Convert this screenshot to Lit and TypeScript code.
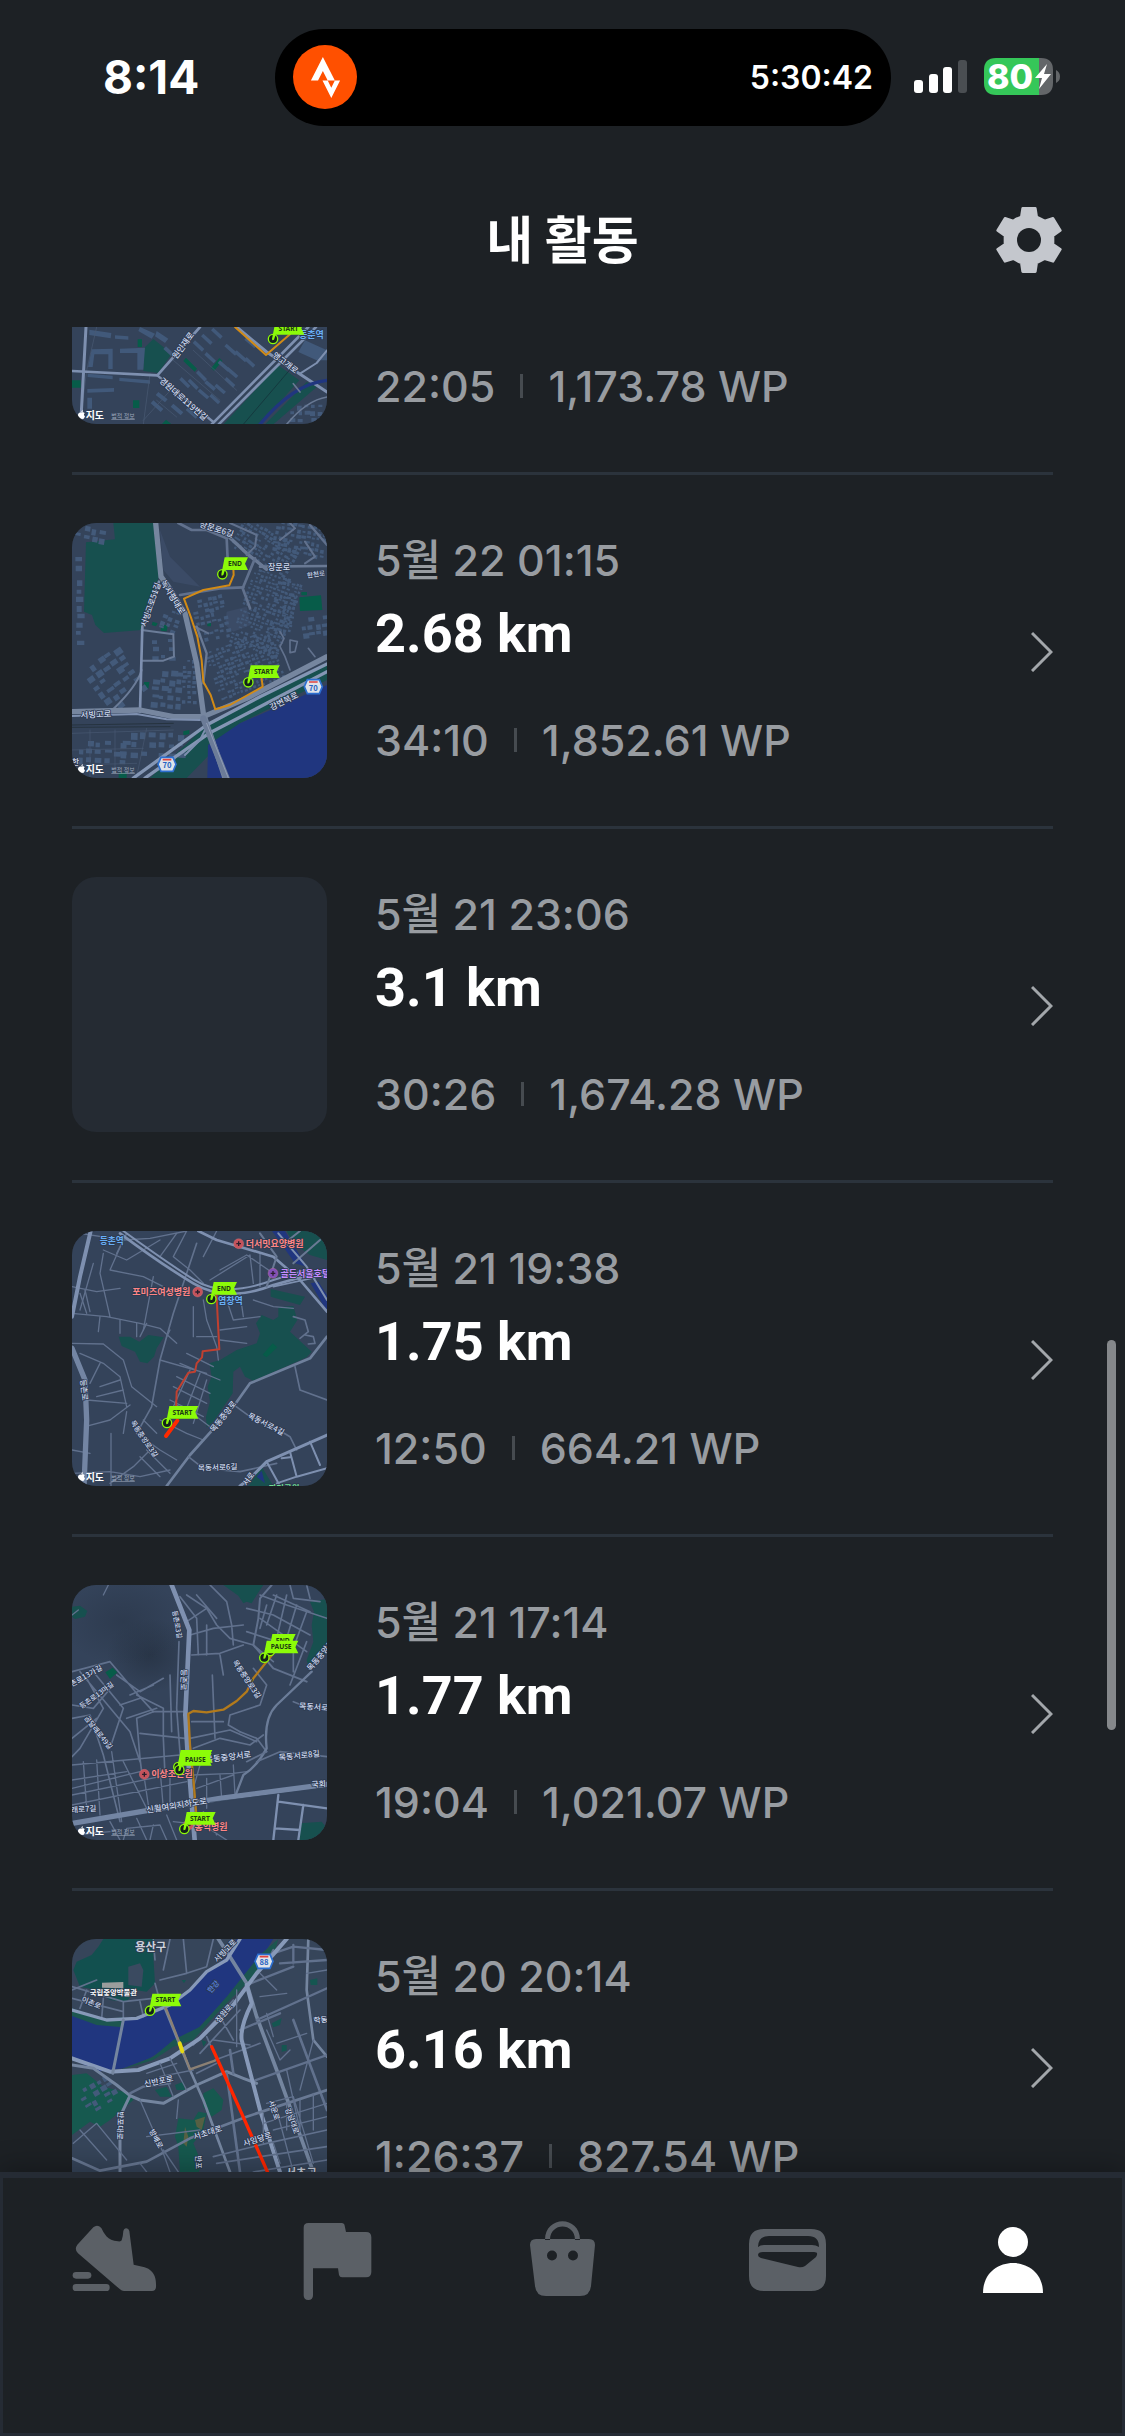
import { LitElement, html, svg, css, nothing } from "lit";
import { customElement, property } from "lit/decorators.js";

type Road = [d: string, width: number, color?: string];
type Label = [text: string, x: number, y: number, size: number, angle?: number, color?: string];
type Flag = [label: string, x: number, y: number, width: number];
type Blocks = [x: number, y: number, w: number, h: number, cell: number, angle: number];

interface MapArt {
  origin: number;
  base?: string;
  areas: [fill: string, d: string][];
  blocks?: Blocks[];
  roads: Road[];
  routes: Road[];
  labels: Label[];
  flags: Flag[];
  pins?: [x: number, y: number, color: string][];
  shields?: [n: string, x: number, y: number][];
  hill?: boolean;
}

interface Activity {
  date?: string;
  distance?: string;
  time: string;
  points: string;
  map?: string;
}

const GREEN = "#17504f";
const PARK = "#075c49";
const WATER = "#20367f";
const MAJOR = "#7e90b0";
const MINOR = "#61718d";
const BLUE = "#68aef5";
const RED = "#ff8585";
const VIOLET = "#c38cff";
const ORANGE = "#d18a16";

/* Small building footprints scattered on a jittered grid. */
const footprints = ([x, y, w, h, cell]: Blocks): string => {
  let seed = x * 7 + y * 13 + 5;
  const rnd = () => (seed = (seed * 16807 + 11) % 2147483647) / 2147483647;
  let d = "";
  for (let py = y; py < y + h; py += cell) {
    for (let px = x; px < x + w; px += cell) {
      if (rnd() < 0.18) continue;
      const bw = Math.round(cell * (0.5 + rnd() * 0.4));
      const bh = Math.round(cell * (0.35 + rnd() * 0.4));
      const jx = Math.round(px + rnd() * cell * 0.3);
      const jy = Math.round(py + rnd() * cell * 0.3);
      d += `M${jx} ${jy}h${bw}v${bh}h${-bw}z`;
    }
  }
  return d;
};

const maps: Record<string, MapArt> = {
  wonin: {
    origin: -454,
    areas: [
      [GREEN, "M250 85L280 56L335 100L295 158L250 152Z M655 135L718 180L600 312H490Z M740 185L770 200L640 312H615Z"],
      [PARK, "M370 122L378 112L411 145L404 154Z M453 144L478 113L487 122L462 151Z M219 240H238V263H219Z M233 57H246V80H233Z M36 180H62V202H36Z M305 312L318 298L335 312Z"],
      ["#41597a", "M88 28L154 38L152 54L88 44Z M165 45L205 48V58L165 55Z M95 87L158 85V146H145V102H103L98 140H84Z M180 85L255 82L250 148H232V98H180Z M83 160L158 166V177L83 170Z M178 172L270 180V190L178 182Z M82 206L162 203V214L82 217Z M82 232H96V265H82Z M240 20L285 40L275 55L235 32Z M290 32L325 55L315 68L285 48Z M735 60L801 90V120H770L715 95Z"],
      ["#41597a", "M318 78l24 22-8 8-24-22z M405 60l28 26-7 8-28-26z M430 40l28 26-7 8-28-26z M460 22l28 26-7 8-28-26z M440 95l28 26-7 8-28-26z M500 70l32 28-7 8-32-28z M530 90l32 28-7 8-32-28z M480 120l30 26-7 8-30-26z M505 140l30 26-7 8-30-26z M415 150l26 26-7 8-26-26z M390 175l26 26-7 8-26-26z M365 170l26 26-7 8-26-26z M440 180l28 24-7 8-28-24z M470 190l28 24-7 8-28-24z M420 205l28 24-7 8-28-24z M455 220l26 24-7 8-26-24z M500 170l26 24-7 8-26-24z M295 215l28 22-8 9-28-22z M280 240l30 26-8 9-30-26z M340 250l30 26-8 9-30-26z M385 260l30 26-8 9-30-26z M560 50l30 26-7 8-30-26z M560 110l26 24-7 8-26-24z"],
    ],
    blocks: [[690, 250, 100, 60, 20, 0]],
    roads: [
      ["M110 20L80 150L60 312 M270 160L250 312 M340 200L250 300 M400 90L530 210 M340 120L480 240 M350 290L290 240", 2, "#4a5a74"],
      ["M78 20L62 312", 9], ["M36 152L292 165L420 20", 8], ["M292 165L460 305", 7], ["M530 20L620 95L801 215", 9],
      ["M455 312L745 20", 8], ["M476 312L768 20", 8], ["M688 150L550 312", 2, "#142e36"],
      ["M720 160L770 128L801 90", 6], ["M600 312Q700 190 801 180", 10, WATER], ["M680 312Q740 240 801 230 M700 190L720 215", 5, "#697994"],
    ],
    routes: [["M525 20L618 104L690 42", 6, ORANGE]],
    labels: [
      ["원인재로", 370, 84, 25, -54], ["경원대로119번길", 370, 245, 25, 41], ["앵고개로", 676, 136, 24, 37],
      ["동춘역", 754, 53, 27, 0, BLUE],
    ],
    flags: [["START", 639, 56, 87]],
  },
  hannam: {
    origin: 39,
    areas: [
      [GREEN, "M160 39H285L300 190L245 360L132 369L106 345L96 315L72 305L78 97L165 88Z M801 460V510L540 640L380 804H270L440 645L600 560Z"],
      [WATER, "M801 525V804H442L444 705L540 640Z"],
      ["#3b4b66", "M300 60L330 140L420 230L340 215L310 180Z M500 305L560 290L572 345L520 365L495 345Z"],
      [PARK, "M718 262L783 256L787 300L720 303Z M724 246H741V256H724Z M304 344L323 346L320 364L302 362Z M278 335L293 340L288 349L275 345Z M252 516H268L265 536L251 534Z M442 338H453V349H442Z M176 788H200V804H176Z M370 664L388 660L388 672L370 676Z"],
    ],
    blocks: [
      [520, 60, 190, 100, 13, 30], [540, 190, 150, 240, 12, 20], [450, 390, 200, 150, 13, -20], [640, 40, 150, 90, 16, 10],
      [400, 260, 90, 120, 17, -12], [365, 450, 45, 130, 15, 0], [90, 430, 140, 150, 28, -35], [250, 385, 80, 60, 24, 0],
      [275, 480, 80, 100, 24, 5], [45, 110, 25, 290, 25, 0], [45, 50, 90, 40, 24, 10], [720, 320, 75, 60, 22, -8],
      [50, 690, 140, 70, 26, 2], [180, 665, 170, 80, 28, 2], [305, 300, 50, 60, 18, 20], [640, 200, 60, 160, 14, 10],
    ],
    roads: [
      ["M36 645L340 640 M36 652L330 650", 3, "#26333f"],
      ["M36 670L340 660 M36 720L250 715 M90 660V800 M165 660V790 M260 655L230 800 M36 765L230 760", 2, "#485973"],
      ["M355 39L395 60H440L500 85L503 150", 8, MINOR], ["M485 60L560 130L620 178", 10, "#697994"], ["M510 39L590 75L585 110L560 135", 6, MINOR],
      ["M600 170L801 168", 8, "#697994"], ["M660 90L705 55L690 39 M735 95L765 140L735 160", 6, MINOR], ["M750 45L801 105", 7, MINOR],
      ["M585 145L548 235L570 295", 8, MINOR], ["M360 255L480 235L550 232", 8, MINOR], ["M405 350L445 370", 6, MINOR],
      ["M660 365L672 385L660 410L675 440L690 480 M690 390L712 395L705 425L690 428Z", 5, MINOR], ["M745 415L765 440", 5, MINOR],
      ["M245 360L340 373L342 440L310 452H245", 6, "#6b7c98"], ["M245 480Q230 530 160 597", 6, "#6b7c98"],
      ["M287 39L303 200L325 230L375 310L410 460L430 610L495 804", 16, "#76869f"], ["M297 215L247 350L240 605", 8],
      ["M410 350L440 430L430 520", 7, "#697994"],
      ["M36 605L240 600L340 620L430 620L560 565L801 440", 16, "#76869f"], ["M36 618L230 612L320 628L420 630", 6],
      ["M220 804L440 645L600 560L801 462", 10, "#8496b4"], ["M255 804L450 668L620 580L801 485", 10, "#8496b4"], ["M375 735L420 690L440 650", 6],
      ["M430 625L460 705L500 804", 18, "#6c7c98"], ["M440 640L505 804", 2, "#a1aec4"],
    ],
    routes: [["M520 175L521 195L508 226L430 240L372 266L392 320L412 380L425 450L430 515L452 555L466 598L510 585L608 530L604 500", 6, ORANGE]],
    labels: [
      ["장문로6길", 470, 66, 25, 18], ["서빙고로51길", 273, 292, 24, -71], ["녹사평대로", 338, 270, 25, 58], ["장문로", 657, 180, 24], ["한천로", 768, 200, 20, -8],
      ["서빙고로", 108, 622, 25, -3], ["강변북로", 672, 582, 25, -26], ["한", 46, 766, 25],
    ],
    flags: [["END", 487, 193, 70], ["START", 565, 517, 87]],
    shields: [["70", 760, 530], ["70", 321, 763]],
  },
  yeomchang: {
    origin: 33,
    areas: [
      [GREEN, "M680 33H801V120L750 105L700 70Z M176 350L210 350L238 365L265 345L311 352L290 385L282 410L262 430L240 425L225 395L185 378Z M655 262L700 258L712 300L690 335L755 395L740 412L700 430L580 482L555 470L540 440L520 455L518 520L460 605L440 622L438 590L450 545L443 500L455 470L448 430L480 420L530 390L590 370L600 340L588 310L605 285L640 300L655 290Z M632 207L735 230L720 255L632 230Z M570 792L605 740L640 798H565Z"],
      [WATER, "M636 33H675L740 140L705 130Z M752 190L775 185L801 225V275Z M590 770L605 752L615 790Z"],
      [PARK, "M608 404L638 370L652 382L620 412Z"],
    ],
    roads: [
      ["M60 40L190 60L270 55L380 33 M100 130L60 270 M36 280L140 290L240 310L300 325L350 370 M150 290L120 160L130 100 M190 60L150 150L250 170L310 200 M280 170L250 330 M380 33L340 110L390 150L430 190 M430 110L470 33", 4, MINOR],
      ["M36 370L130 372L190 420L215 500L290 560 M60 400L130 430L180 470L200 560 M90 490L120 430 M80 540L200 550 M75 620L150 600L210 555 M120 500L180 480 M110 530L190 510 M200 575L190 640", 4, MINOR],
      ["M410 70L340 280L300 420L275 560L230 640", 5, MINOR], ["M300 60L200 120L130 90 M200 40L170 100 M350 40L300 110 M36 200L110 215L180 205", 4, MINOR],
      ["M60 220L80 280 M75 210L90 275 M120 290L115 335 M180 300V340 M230 310V350 M260 310L240 350 M320 350L330 330", 4, MINOR],
      ["M430 240L440 300L470 380L475 420 M400 260V350 M410 350H470 M360 430L480 480 M380 400L460 440 M300 420L440 460 M350 470L450 520 M340 500L440 550 M330 540L430 590 M390 450L340 560 M420 460L370 590 M440 480L400 610", 4, MINOR],
      ["M500 240L520 300L600 290 M540 220L550 290 M570 105L580 190 M480 150L560 105L640 160 M600 100V200 M450 180L570 105 M480 330L560 320 M480 360L560 370 M580 240L640 260L700 265", 4, MINOR],
      ["M700 290L735 300L745 335L720 355 M735 345L760 350L765 370L745 372", 5, MINOR],
      ["M350 555L410 590L450 620 M300 600L380 640L430 660 M230 640L300 690L350 720 M250 600L290 640 M240 710L300 770 M260 690L330 760 M280 680L220 740L150 790 M36 760L150 755L240 770L330 750 M153 640V798 M36 690L90 700", 4, MINOR],
      ["M92 33L60 170L36 290", 12], ["M36 385L75 480L80 600L72 798", 16, "#7385a3"],
      ["M180 40Q300 130 400 190T640 195L801 150", 8], ["M190 33Q310 120 400 178T640 180L740 150", 6], ["M640 200L801 165", 5],
      ["M415 33L470 60L640 110L720 180L801 275", 8], ["M600 40L650 110L620 200 M660 80L720 33 M700 130L780 60", 6, "#697994"], ["M655 40L740 140L801 240", 6],
      ["M801 350L750 415L570 490L520 560L390 705L320 798", 8, "#6f809c"], ["M515 550L570 590L640 620L690 650L710 690", 5, MINOR], ["M705 440L720 510L801 540", 5, MINOR], ["M385 710L430 745L540 755L650 730", 5, MINOR],
      ["M801 645L620 725L570 775L540 798", 9], ["M620 725L660 798 M690 695L710 770L650 790 M710 770L801 745 M750 665L780 735 M665 715L690 712", 6],
    ],
    routes: [["M469 215L478 388L428 394L426 412L410 430L405 455L385 458L350 515L348 570", 6, "#c04030"], ["M352 602L318 648", 12, "#ff2a00"]],
    labels: [
      ["등촌역", 155, 72, 26, 0, BLUE], ["더서밋요양병원", 644, 80, 27, 0, RED], ["골든서울호텔", 736, 170, 27, 0, VIOLET],
      ["포미즈여성병원", 304, 226, 27, 0, RED], ["염창역", 511, 252, 27, 0, BLUE],
      ["등촌로", 72, 518, 23, 84], ["목동중앙로", 490, 598, 24, -52], ["목동서로4길", 618, 620, 23, 27], ["목동중앙로3길", 252, 664, 21, 56], ["목동서로6길", 473, 750, 23, -2], ["서로", 566, 785, 23, -55], ["파리공원", 672, 812, 25, 0, "#6fdf92"],
    ],
    flags: [["END", 454, 237, 70], ["START", 321, 609, 87]],
    pins: [[536, 71, "#c4535c"], [639, 160, "#8250b8"], [413, 216, "#c4535c"]],
  },
  sinwol: {
    origin: 30,
    hill: true,
    areas: [
      [GREEN, "M490 30H610L590 60L575 85L560 80L550 85L535 62Z M750 80L801 72V230L745 275L740 255L760 200L755 150L762 110Z M36 95L60 92L82 108L75 125L45 132L36 125Z"],
      [PARK, "M136 292L158 278L172 292L150 312Z"],
      [GREEN, "M720 745L785 740L801 760V795H718Z"],
    ],
    roads: [
      ["M130 60L145 30 M36 120L55 105", 4, MINOR],
      ["M380 60L440 100L470 150L510 190L580 210L640 260 M360 65L410 130L415 240 M410 60L470 130 M440 100L380 140 M450 30L500 80L515 150 M395 240L480 235L550 210 M440 240V150 M390 180L460 160L550 150 M515 150L520 210 M480 240L490 300", 5, MINOR],
      ["M635 30L600 70L595 130L580 210L640 280L740 320", 6, MINOR],
      ["M560 100L640 120L750 180 M600 130L740 230 M620 90L600 160 M650 60L620 150 M680 60L650 190 M710 90L680 190 M740 110L700 220 M600 60L680 90L801 130 M640 60L750 110 M690 30L700 70L780 80 M740 30L750 70 M560 170L700 215 M700 230V290 M740 200L690 330 M580 280L620 330L600 390L510 420L505 450L540 470", 5, MINOR],
      ["M36 290L150 260L230 355L280 410L230 430L240 550L245 590 M36 330L80 310L130 400L60 520L36 545 M60 290L210 470L240 560 M36 390L100 400L160 330 M100 290L190 400L150 520 M36 430L90 420L130 540L180 740 M36 490L110 430 M170 300L240 350L310 310 M210 360L280 330 M230 360L310 400L310 490L315 600 M200 430L290 400 M180 390L240 370", 5, MINOR],
      ["M357 200L350 400L365 600 M330 300L335 470 M280 410H375 M240 475L375 490 M395 440H490 M457 300L465 490 M390 490L510 465L590 500 M400 520L480 490L570 510L610 480 M540 470L590 490L620 530", 5, MINOR],
      ["M36 570L360 540 M36 640L240 590 M36 660L370 590 M36 690L380 620 M70 560L80 700 M110 555L120 720 M155 530L185 740 M190 560L260 700 M250 590L265 690 M300 580L310 700 M330 610V690 M36 615L200 590", 4, MINOR],
      ["M400 600L520 595L560 590 M410 640L520 600 M440 610V700 M480 600L485 670 M520 570L525 660 M420 570L400 640", 4, MINOR],
      ["M335 30L388 165L376 420L382 520L404 795", 14], ["M755 290L650 390Q610 430 620 520Q590 575 550 600L525 665", 7, "#6b7c98"],
      ["M700 380L750 400L801 395 M590 560L660 530L801 545 M560 560L620 530", 5, MINOR],
      ["M36 745L300 700L480 670L801 628", 16, "#7385a3"], ["M450 682L801 640", 2, "#34445b"],
      ["M190 795L200 760L300 750L320 795 M150 740L180 795 M230 730L260 795 M320 720L350 795 M340 740L430 750L500 795 M430 710L470 780 M36 780L150 770 M280 750L270 795", 4, MINOR],
      ["M655 660L640 795 M655 680L801 700 M730 690L715 795 M645 760L720 765", 7],
    ],
    routes: [["M640 235L580 310L560 350L530 378L490 404L440 412L400 408L385 416L390 510L400 610L408 710", 7, "#b27a1c"]],
    labels: [
      ["등촌로3길", 351, 155, 20, 80], ["등촌로", 370, 322, 23, 92], ["목동중앙로3길", 560, 320, 22, 56], ["목동중앙로", 782, 250, 24, -50],
      ["등촌로13가길", 70, 315, 22, -30], ["등촌로13마길", 110, 368, 21, -36], ["곰달래로49길", 115, 480, 21, 52], ["목동서로8길", 718, 550, 24, -6],
      ["목동서로4", 768, 405, 24, 4], ["목동중앙서로", 505, 555, 25, -7], ["국회", 776, 636, 24, -4], ["신월여의지하도로", 350, 700, 25, -9], ["곰달래로7길", 50, 712, 23, -4],
      ["이상조은원", 336, 607, 27, 0, RED], ["홍익병원", 453, 765, 27, 0, RED],
    ],
    flags: [["END", 630, 228, 70], ["PAUSE", 613, 248, 95], ["PAUSE", 355, 576, 95], ["PAUSE", 358, 585, 90], ["START", 373, 762, 87]],
    pins: [[253, 598, "#c4535c"], [385, 750, "#c4535c"]],
  },
  gangnam: {
    origin: 27,
    base: "#36455a",
    areas: [
      ["#12504f", "M130 27H285L280 80L285 160L260 185L225 180L200 215L150 210L110 180L60 170L40 120L50 95L95 75L115 50Z"],
      ["#3a4a60", "M205 110L240 100L250 120L245 170L205 165Z"],
      [WATER, "M36 250L110 270L230 262L330 225L400 170L440 125L495 85L530 27H640L600 90L545 150L480 225L400 310L330 345L270 385L190 415L110 425L36 385Z"],
      ["#1c5650", "M600 75L640 40L655 27L645 60L570 150L480 240L400 330L340 350L280 390L180 420L280 380L340 330L420 290L500 200Z M36 235L130 268L190 262L190 292L110 285L36 258Z"],
      ["#16594f", "M36 435L80 430L130 470L210 490L220 510L150 570L120 590L90 575L36 615Z M430 490L460 475L490 510L485 540L455 560L430 530Z M355 565L400 570L415 545L440 550L430 600L400 640L425 700L415 730H360L355 650L345 620Z"],
      ["#155651", "M285 480L320 470L335 500L300 500Z M345 465L370 455L375 480L350 480Z M635 280L665 265L660 285L640 292Z M750 150L772 145V165L752 165Z M365 150L378 150L372 160Z M425 330L440 335L430 350Z M665 345H680V362L665 365Z"],
      ["#566043", "M375 590L385 620L380 650L370 640Z M405 570L435 560L425 600L410 590Z"],
      ["#9a9d9c", "M126 158L190 156L190 175L126 173Z"],
    ],
    blocks: [[60, 460, 90, 80, 22, -30]],
    roads: [
      ["M36 170L190 215L280 205L340 215 M190 215V265 M36 180L110 150 M80 180L60 235 M130 205L125 265 M36 205L190 245 M240 215L250 260 M285 160L300 215 M285 90L280 27 M300 150L380 130L370 27 M330 27L310 120 M380 130L440 110L460 27", 5, MINOR],
      ["M475 27L510 80L560 160L590 260L650 420L760 726", 11, "#74859f"], ["M745 27L740 180L760 330L801 380", 8, "#74859f"],
      ["M640 70L700 50L801 60 M660 100L801 90 M590 270L801 175 M575 455L801 375 M540 300L660 250 M700 45V100 M620 100L640 60 M560 165L700 110", 7, MINOR],
      ["M400 345L520 210 M420 370L540 240 M440 320L460 365 M480 260L520 330 M460 330L570 345 M465 390L600 340 M410 430L470 400", 5, MINOR],
      ["M36 385L150 425L235 420L330 385L420 325L520 225L590 130L660 50L680 27", 12, "#8799b8"], ["M36 240L140 270L230 265L330 225L390 180L440 125L500 90L540 27", 10, "#8799b8"],
      ["M190 270L158 430", 9, "#74859f"], ["M36 405L100 415L170 465L210 497L180 560V726", 9, "#74859f"],
      ["M210 497L240 510L310 520L410 465L500 425L550 445L590 460", 9, "#74859f"], ["M210 490L250 470L330 460", 7, MINOR],
      ["M315 235L390 420L430 510L510 726", 8, "#74859f"], ["M560 165L575 220Q540 290 545 330L600 540L660 726", 12, "#8799b8"],
      ["M520 430L510 360 M500 430L540 726 M700 270L801 540", 8, MINOR],
      ["M36 685L120 722L260 695L390 625L560 560L801 480", 8, "#697994"], ["M460 680L620 640L801 600 M470 700L800 650 M580 726L801 690", 5, MINOR],
      ["M240 510L310 670L330 726 M310 660L355 726 M260 620L420 600 M40 640L110 580L200 690 M60 600L140 690 M300 400L340 500 M260 430L350 400 M330 385L380 480 M300 440L400 420 M350 565L355 510 M240 700L260 726", 4, MINOR],
      ["M610 550V640 M650 540L700 726 M610 580L801 520 M640 600L801 560 M620 520L700 500L760 700 M680 520V600 M720 510V600 M760 490V600 M640 640L660 700 M600 130L650 180 M600 200L680 190 M620 300L660 390L690 360 M650 340L740 310 M530 180V350 M620 250L640 320 M801 120L740 130 M760 330L720 480 M680 420L720 600", 4, MINOR],
    ],
    routes: [["M318 235L390 418L465 392", 7, "#8b8074"], ["M359 340L367 364", 12, "#e5d816"], ["M455 350L480 405L545 550L626 734", 10, "#ff2600"]],
    labels: [
      ["용산구", 272, 64, 34, 0, "#cdd2dc"], ["국립중앙박물관", 160, 195, 22, 0, "#ffffff"], ["이촌로", 94, 226, 22, 22], ["서빙고로", 496, 70, 23, -46], ["한강", 460, 178, 22, -48, "#5279d4"],
      ["잠원로", 492, 258, 23, -50], ["신반포로", 296, 462, 24, -12], ["반포대로", 180, 594, 23, 92], ["방배로", 288, 634, 22, 62], ["서초대로", 443, 616, 24, -18], ["사임당로", 592, 636, 24, -18],
      ["서운로", 642, 548, 22, 72], ["강남대로", 696, 580, 22, 70], ["학동", 782, 278, 23, -8], ["반포", 415, 704, 22, 90], ["서초구", 724, 741, 34, 0, "#cdd2dc"],
    ],
    flags: [["START", 270, 242, 87]],
    shields: [["88", 612, 94]],
  },
};

@customElement("route-map")
export class RouteMap extends LitElement {
  @property() name = "";

  static styles = css`
    :host {
      display: block;
      width: 255px;
      aspect-ratio: 1;
      flex: none;
      border-radius: 24px;
      overflow: hidden;
      background: #252b33;
    }
    .art {
      display: block;
      width: 100%;
      height: 100%;
      font-family: "Noto Sans CJK KR", sans-serif;
    }
    .halo {
      paint-order: stroke;
      stroke: #2c394e;
      stroke-width: 5px;
      stroke-linejoin: round;
    }
  `;

  render() {
    const m = maps[this.name];
    if (!m) return nothing;
    const foot = m.origin + 736;
    return html`
      <svg class="art" viewBox="36 ${m.origin} 765 765" aria-hidden="true">
        <defs>
          <radialGradient id="hill">
            <stop offset="0" stop-color="#263243" />
            <stop offset="1" stop-color="#263243" stop-opacity="0" />
          </radialGradient>
        </defs>
        <rect x="36" y=${m.origin} width="765" height="765" fill=${m.base ?? "#34435a"} />
        ${m.hill
          ? svg`<ellipse cx="270" cy="240" rx="130" ry="110" fill="url(#hill)" opacity="0.8" />
                <ellipse cx="190" cy="140" rx="180" ry="130" fill="url(#hill)" opacity="0.5" />`
          : nothing}
        ${m.areas.map(([fill, d]) => svg`<path fill=${fill} d=${d} />`)}
        ${m.blocks?.map(
          (b) => svg`<path fill="#435a7a" d=${footprints(b)}
            transform="rotate(${b[5]} ${b[0] + b[2] / 2} ${b[1] + b[3] / 2})" />`
        )}
        ${[...m.roads, ...m.routes].map(
          ([d, w, c]) => svg`<path d=${d} fill="none" stroke=${c ?? MAJOR} stroke-width=${w}
            stroke-linejoin="round" stroke-linecap="round" />`
        )}
        ${m.labels.map(
          ([t, x, y, s, a, c]) => svg`<text class="halo" x=${x} y=${y} font-size=${s} font-weight=${c ? 700 : 500}
            text-anchor="middle" fill=${c ?? "#cfdaf0"} transform="rotate(${a ?? 0} ${x} ${y - s / 3})">${t}</text>`
        )}
        ${m.pins?.map(
          ([x, y, c]) => svg`<circle cx=${x} cy=${y} r="15" fill=${c} stroke="#f08a8a" stroke-opacity="0.4" stroke-width="2" />
            <path d="M${x - 7} ${y}h14M${x} ${y - 7}v14" stroke="#2b1f2c" stroke-width="4" />`
        )}
        ${m.shields?.map(
          ([n, x, y]) => svg`<path d="M${x - 18} ${y - 21}h36l9 21l-9 21h-36l-9-21z" fill="#dfe3ea" stroke="#2d6fd0" stroke-width="5" />
            <path d="M${x - 13} ${y - 14}h26" stroke="#e0443e" stroke-width="5" />
            <text x=${x} y=${y + 12} text-anchor="middle" font-size="23" font-weight="700" fill="#2862c0">${n}</text>`
        )}
        ${m.flags.map(
          ([t, x, y, w]) => svg`
            <circle cx=${x} cy=${y} r="14" fill="#14211c" stroke="#8cfb08" stroke-width="4" />
            <path fill="#8cfb08" d="M${x + 7} ${y - 51}h${w}l-9 19l9 19h${-w + 1}l-5 15l-5 2l-1-4z" />
            <text x=${x + 3 + w / 2} y=${y - 25} text-anchor="middle" font-family="Noto Sans, sans-serif"
              font-size="20" font-weight="700" fill="#1d3a14">${t}</text>`
        )}
        <path fill="#ffffff" transform="translate(54 ${foot - 10})"
          d="M10 5c3-2 8-2 10 2-3 2-3 7 1 9-2 5-4 9-7 8-2-1-3-1-5 0C4 25 0 18 0 12 0 6 5 3 10 5zM10 4c0-4 2-6 5-6 0 4-2 6-5 6z" />
        <text x="77" y=${foot + 13} font-size="30" font-weight="700" fill="#ffffff">지도</text>
        <text x="154" y=${foot + 11} font-size="18" text-decoration="underline" fill="#9aa5b8">법적 정보</text>
      </svg>
    `;
  }
}

const activities: Activity[] = [
  { time: "22:05", points: "1,173.78 WP", map: "wonin" },
  { date: "5월 22 01:15", distance: "2.68 km", time: "34:10", points: "1,852.61 WP", map: "hannam" },
  { date: "5월 21 23:06", distance: "3.1 km", time: "30:26", points: "1,674.28 WP" },
  { date: "5월 21 19:38", distance: "1.75 km", time: "12:50", points: "664.21 WP", map: "yeomchang" },
  { date: "5월 21 17:14", distance: "1.77 km", time: "19:04", points: "1,021.07 WP", map: "sinwol" },
  { date: "5월 20 20:14", distance: "6.16 km", time: "1:26:37", points: "827.54 WP", map: "gangnam" },
];

const tabs = [
  {
    name: "운동",
    box: "22 30 270 270",
    art: svg`<path d="M98 67Q110 57 122 69C130 84 140 108 172 109Q182 110 183 106Q187 95 188 78Q190 69 197 70Q204 70 206 78L219 179C236 184 256 184 268 195C284 208 287 225 286 247Q285 258 274 258H190Q183 258 178 253L52 145Q40 133 50 119Z" />
      <rect x="36" y="201" width="56" height="20" rx="10" /><rect x="36" y="237" width="111" height="21" rx="10" />`,
  },
  {
    name: "챌린지",
    box: "698 30 270 270",
    art: svg`<path d="M744 54H844Q852 54 853 62L857 81H917Q933 81 933 97V201Q933 217 917 217H845Q838 217 836 210L833 190H758V271Q758 285 744 285Q730 285 730 271V68Q730 54 744 54Z" />`,
  },
  {
    name: "상점",
    box: "517 2215 90 90",
    art: svg`<path fill-rule="evenodd" d="M544 2240C544 2215 579 2215 579 2240H574C574 2222 549 2222 549 2240ZM535 2239H588Q594 2239 594 2245L590 2286Q589 2296 579 2296H545Q535 2296 534 2286L529 2245Q529 2239 535 2239ZM551 2250.500A5 5 0 1 0 551 2260.500A5 5 0 1 0 551 2250.500ZM572 2250.500A5 5 0 1 0 572 2260.500A5 5 0 1 0 572 2250.500Z" />`,
  },
  {
    name: "지갑",
    box: "742 2215 90 90",
    art: svg`<path fill-rule="evenodd" d="M763 2229H810Q825 2229 825 2244V2276Q825 2291 810 2291H763Q748 2291 748 2276V2244Q748 2229 763 2229ZM757 2247Q759 2245 763 2245H811Q815 2245 818 2247Q818 2236 807 2236H768Q757 2236 757 2247ZM762 2252Q757 2252 757 2255Q757 2257 760 2258L797 2267Q801 2268 804 2266L815 2257Q818 2252 813 2252Z" />`,
  },
  {
    name: "프로필",
    box: "967 2215 90 90",
    art: svg`<circle cx="1012" cy="2242" r="15" /><path d="M982 2293C982 2253 1042 2253 1042 2293Z" />`,
  },
];

@customElement("app-root")
export class AppRoot extends LitElement {
  static styles = css`
    :host {
      display: flex;
      flex-direction: column;
      position: relative;
      height: 100vh;
      background: #1d2125;
      color: #ffffff;
      font-family: Inter, "Noto Sans CJK KR", sans-serif;
      overflow: hidden;
    }
    svg {
      display: block;
    }
    .status {
      display: flex;
      align-items: center;
      height: 154px;
      flex: none;
      box-sizing: border-box;
      padding: 0 64px 0 103px;
    }
    .clock {
      flex: 1;
      font-size: 46px;
      font-weight: 700;
      line-height: 52px;
    }
    .island {
      display: flex;
      align-items: center;
      justify-content: space-between;
      box-sizing: border-box;
      width: 616px;
      height: 97px;
      padding: 0 18px;
      border-radius: 49px;
      background: #000000;
      font-size: 32px;
      font-weight: 600;
    }
    .strava {
      display: grid;
      place-items: center;
      width: 64px;
      height: 64px;
      border-radius: 50%;
      background: #ff5000;
    }
    .signal {
      margin-left: 23px;
    }
    .battery {
      margin-left: 17px;
      font-weight: 800;
      font-size: 34px;
    }
    .header {
      display: grid;
      grid-template-columns: 66px 1fr 66px;
      align-items: center;
      flex: none;
      height: 173px;
      box-sizing: border-box;
      padding: 0 63px 2px;
    }
    .title {
      grid-column: 2;
      margin: 0;
      padding-bottom: 6px;
      font-family: "Noto Sans CJK KR", sans-serif;
      font-size: 51px;
      font-weight: 700;
      line-height: 76px;
      text-align: center;
    }
    .gear {
      padding: 0;
      border: 0;
      background: none;
      cursor: pointer;
    }
    .list {
      flex: 1;
      min-height: 0;
      margin: 0;
      padding: 0 72px;
      list-style: none;
      overflow-y: auto;
      scrollbar-width: none;
    }
    .item {
      border-bottom: 3px solid #2b333c;
    }
    .row {
      display: flex;
      align-items: center;
      gap: 48px;
      padding: 48px 0;
      color: inherit;
      text-decoration: none;
    }
    .info {
      display: flex;
      flex-direction: column;
      flex: 1;
      align-self: stretch;
      padding: 9px 0 10px;
      box-sizing: border-box;
    }
    .date,
    .stats {
      color: #989ca1;
      font-size: 43px;
      font-weight: 500;
      line-height: 56px;
    }
    .distance {
      font-family: Roboto, sans-serif;
      font-size: 54px;
      font-weight: 700;
      line-height: 72px;
      margin-top: 10px;
    }
    .stats {
      display: flex;
      align-items: center;
      gap: 25px;
      margin-top: auto;
    }
    .bar {
      width: 3px;
      height: 24px;
      background: #464b50;
    }
    .thumb {
      position: absolute;
      right: 9px;
      top: 55%;
      width: 9px;
      height: 16%;
      border-radius: 5px;
      background: #85888b;
    }
    .tabs {
      display: grid;
      grid-template-columns: repeat(5, 1fr);
      flex: none;
      height: 264px;
      box-sizing: border-box;
      padding-top: 43px;
      background: #1d2125;
      box-shadow:
        inset 0 6px #252b34,
        inset 0 0 0 3px #252b34,
        0 -6px 24px rgba(0, 0, 0, 0.25);
      z-index: 1;
    }
    .tab {
      display: flex;
      justify-content: center;
      align-items: flex-start;
      color: #5b6066;
    }
    .tab[aria-current] {
      color: #ffffff;
    }
  `;

  firstUpdated() {
    const list = this.renderRoot.querySelector(".list");
    if (list) list.scrollTop = 206;
  }

  private row(a: Activity) {
    return html`
      <li class="item">
        <a class="row" href="#activity">
          <route-map name=${a.map ?? ""}></route-map>
          <div class="info">
            ${a.date ? html`<div class="date">${a.date}</div>` : nothing}
            ${a.distance ? html`<div class="distance">${a.distance}</div>` : nothing}
            <div class="stats"><span>${a.time}</span><span class="bar"></span><span>${a.points}</span></div>
          </div>
          ${a.date
            ? html`<svg width="22" height="42" viewBox="1 -2 22 42" fill="none" stroke="#a3a7ab" stroke-width="3" aria-hidden="true">
                <path d="M2 1L21 20L2 39" />
              </svg>`
            : nothing}
        </a>
      </li>
    `;
  }

  render() {
    return html`
      <div class="status">
        <span class="clock">8:14</span>
        <div class="island">
          <span class="strava">
            <svg width="41" height="41" viewBox="0 0 24 24" fill="#ffffff" aria-hidden="true">
              <path d="M15.387 17.944l-2.089-4.116h-3.065L15.387 24l5.150-10.172h-3.066m-7.008-5.599l2.836 5.598h4.172L10.463 0l-7 13.828h4.169" />
            </svg>
          </span>
          <span>5:30:42</span>
        </div>
        <svg class="signal" width="53" height="34" viewBox="0 0 53 34" fill="#ffffff" aria-hidden="true">
          <rect y="20" width="9" height="13" rx="3" />
          <rect x="15" y="14" width="9" height="19" rx="3" />
          <rect x="29" y="7" width="9" height="26" rx="3" />
          <rect x="44" width="9" height="33" rx="3" fill="#4a4e52" />
        </svg>
        <svg class="battery" width="77" height="50" viewBox="0 -6 77 50" aria-hidden="true">
          <path fill="#35c759" d="M12 0H55V37H12Q0 37 0 25V12Q0 0 12 0Z" />
          <path fill="#636669" d="M55 0H57Q69 0 69 12V25Q69 37 57 37H55ZM72 12Q76 14 76 18.500Q76 23 72 25Z" />
          <text x="26" y="31" text-anchor="middle" fill="#ffffff">80</text>
          <path fill="#ffffff" d="M63 6L51 20H58L55 31L67 16H60Z" />
        </svg>
      </div>
      <header class="header">
        <h1 class="title">내 활동</h1>
        <button class="gear" aria-label="설정">
          <svg width="66" height="66" viewBox="18 36 198 198">
            <g fill="#c4c7cd" stroke="#c4c7cd" stroke-width="8" stroke-linejoin="round">
              <path d="M98 40H136L140 66Q150 70 164 78L189 70L211 106L189 122V148L211 163L189 199L164 191Q152 198 140 203L136 230H98L94 203Q82 198 70 191L45 199L23 163L45 148V122L23 106L45 70L70 78Q82 70 94 66Z" />
            </g>
            <circle cx="117" cy="135" r="36" fill="#1d2125" />
          </svg>
        </button>
      </header>
      <ul class="list">
        ${activities.map((a) => this.row(a))}
      </ul>
      <div class="thumb"></div>
      <nav class="tabs">
        ${tabs.map(
          (t, i) => html`<a class="tab" href="#tab" aria-label=${t.name} aria-current=${i === 4 ? "page" : nothing}>
            <svg width="90" height="90" viewBox=${t.box} fill="currentColor">${t.art}</svg>
          </a>`
        )}
      </nav>
    `;
  }
}
